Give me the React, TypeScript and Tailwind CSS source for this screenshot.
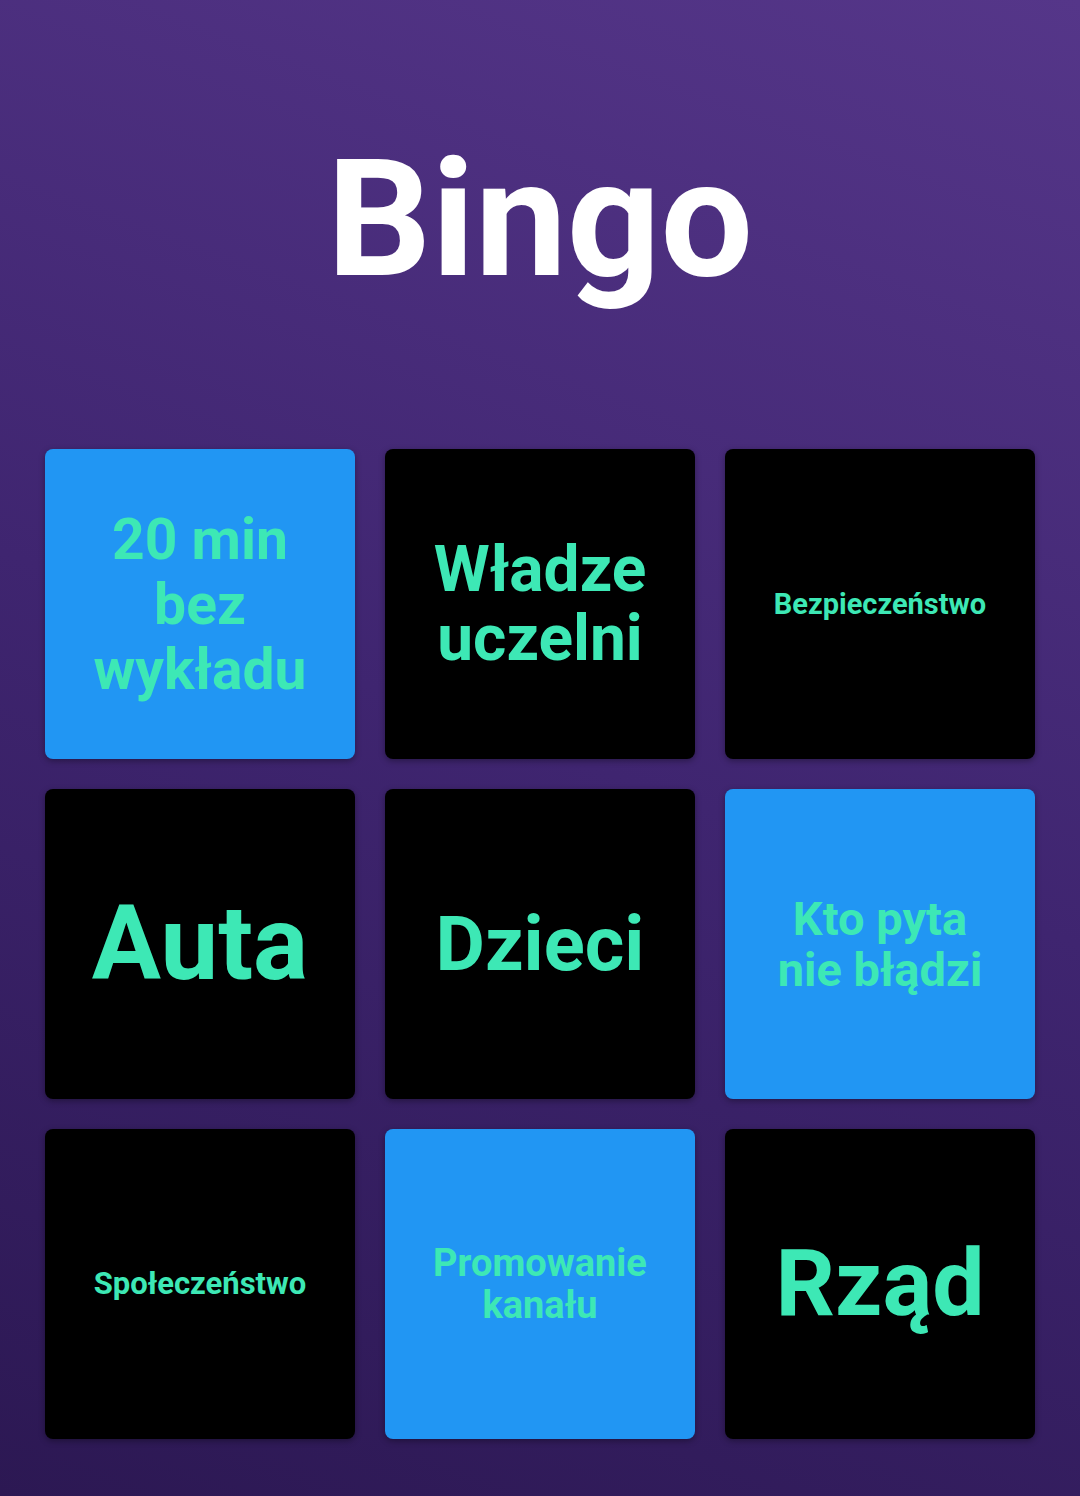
type Tile = {
  lines: string[];
  blue: boolean;
  size: string;
};

const tiles: Tile[] = [
  { lines: ["20 min", "bez", "wykładu"], blue: true, size: "text-[57px] leading-[65px]" },
  { lines: ["Władze", "uczelni"], blue: false, size: "text-[64px] leading-[69px]" },
  { lines: ["Bezpieczeństwo"], blue: false, size: "text-[29px] leading-[34px]" },
  { lines: ["Auta"], blue: false, size: "text-[103px] leading-[118px]" },
  { lines: ["Dzieci"], blue: false, size: "text-[76px] leading-[88px]" },
  { lines: ["Kto pyta", "nie błądzi"], blue: true, size: "text-[47px] leading-[51px]" },
  { lines: ["Społeczeństwo"], blue: false, size: "text-[31px] leading-[36px]" },
  { lines: ["Promowanie", "kanału"], blue: true, size: "text-[38px] leading-[42px]" },
  { lines: ["Rząd"], blue: false, size: "text-[93px] leading-[108px]" },
];

export default function App() {
  return (
    <div className="min-h-[1496px] w-full bg-[linear-gradient(200deg,#553689_0%,#3f2570_50%,#2c1853_100%)] px-[45px] pt-[123px] font-['Roboto',sans-serif]">
      <h1 className="text-center text-[164px] font-bold leading-[192px] text-white">
        Bingo
      </h1>

      <div className="mt-[134px] grid grid-cols-3 gap-[30px]">
        {tiles.map((t, i) => (
          <div
            key={i}
            className={
              "flex h-[310px] items-center justify-center rounded-lg text-center font-bold text-[#3de8b5] shadow-[0_2px_6px_rgba(0,0,0,0.35)] " +
              (t.blue ? "bg-[#2196f3] " : "bg-black ") +
              t.size
            }
          >
            <div>
              {t.lines.map((l, j) => (
                <div key={j}>{l}</div>
              ))}
            </div>
          </div>
        ))}
      </div>
    </div>
  );
}
